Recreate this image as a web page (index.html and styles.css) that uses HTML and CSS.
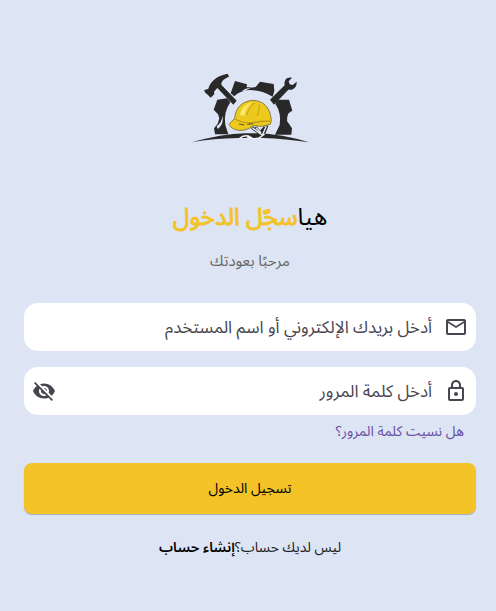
FILE: index.html
```html
<!DOCTYPE html>
<html lang="ar" dir="rtl">
<head>
<meta charset="utf-8">
<meta name="viewport" content="width=device-width, initial-scale=1">
<title>تسجيل الدخول</title>
<link rel="stylesheet" href="styles.css">
</head>
<body>
<main class="page">
  <svg class="logo" viewBox="0 0 390 255" aria-hidden="true">
    <g fill="#292929">
      <path d="M20 232Q110 207 180 205H215Q290 207 372 232Q300 221 236 219L160 219Q85 220 20 232Z"/>
      <path d="M57 76L70 71C76 50 94 32 128 26L132 35C117 41 108 49 109 59L155 107L145 119L97 69L87 80L88 88L77 98L69 90L61 83Z"/>
      <path d="M255 104L299 61C296 46 305 35 321 38L311 49L314 58L323 60L335 50C336 66 325 77 310 74L267 119Z"/>
      <path d="M137 85L150 48L186 58L185 67L212 66L225 50L266 57L268 77L263 95Q228 74 192 75Q164 77 148 94Z"/>
      <path d="M97 104L126 100L136 112Q115 142 121 180L130 208H90L87 190L98 176L103 160L99 148L86 134Z"/>
      <path d="M278 104L312 104L322 137L309 147L306 168L321 190L319 209H270L284 180Q290 145 271 116Z"/>
    </g>
    <path d="M171 77Q195 64 213 66Q192 68 181 78ZM95 184Q111 172 112 153Q118 176 98 192ZM319 138Q304 149 308 167Q312 151 319 138Z" fill="#dde4f4"/>
    <path d="M201 187Q218 201 234 211L246 181M211 187L226 203L240 187" fill="none" stroke="#292929" stroke-width="9"/>
    <path d="M202 188Q220 202 232 211L244 183M213 188L228 203M164 219Q183 207 196 216Q212 229 225 217L239 207M185 215Q203 225 222 219" fill="none" stroke="#eef1f7" stroke-width="4"/>
    <path d="M132 178L149 160C151 130 170 108 204 106C239 107 257 132 259 167L256 178Q232 188 205 182Q184 199 159 196Q138 192 132 178Z" fill="#ecc91c" stroke="#5b5424" stroke-width="2"/>
    <path d="M149 162Q173 175 203 174Q230 167 257 169" fill="none" stroke="#bd9712" stroke-width="4"/>
    <path d="M164 150Q171 119 202 111Q183 128 178 153Z" fill="#fae66a"/>
    <path d="M186 151Q190 126 210 113M216 153Q225 135 223 118" fill="none" stroke="#c7a218" stroke-width="3"/>
    <path d="M162 177L178 180M187 178L204 176" stroke="#575028" stroke-width="3"/>
  </svg>

  <h1 class="title">هيا<span class="title-accent">سجّل الدخول</span></h1>
  <p class="subtitle">مرحبًا بعودتك</p>

  <form class="form">
    <div class="field">
      <svg class="icon" viewBox="0 0 24 24" aria-hidden="true"><path d="M22 6c0-1.100-.9-2-2-2H4c-1.100 0-2 .9-2 2v12c0 1.100.9 2 2 2h16c1.100 0 2-.9 2-2V6zm-2 0l-8 5-8-5h16zm0 12H4V8l8 5 8-5v10z"/></svg>
      <input class="input" type="text" aria-label="البريد الإلكتروني" placeholder="أدخل بريدك الإلكتروني أو اسم المستخدم">
    </div>
    <div class="field">
      <svg class="icon" viewBox="0 0 24 24" aria-hidden="true"><path d="M18 8h-1V6c0-2.760-2.240-5-5-5S7 3.240 7 6v2H6c-1.100 0-2 .9-2 2v10c0 1.100.9 2 2 2h12c1.100 0 2-.9 2-2V10c0-1.100-.9-2-2-2zM9 6c0-1.660 1.340-3 3-3s3 1.340 3 3v2H9V6zm9 14H6V10h12v10zm-6-3c1.100 0 2-.9 2-2s-.9-2-2-2-2 .9-2 2 .9 2 2 2z"/></svg>
      <input class="input" type="password" aria-label="كلمة المرور" placeholder="أدخل كلمة المرور">
      <button class="toggle" type="button" aria-label="إظهار كلمة المرور">
        <svg class="icon" viewBox="0 0 24 24" aria-hidden="true"><path d="M12 7c2.760 0 5 2.240 5 5 0 .65-.13 1.260-.36 1.830l2.920 2.920c1.510-1.260 2.700-2.890 3.430-4.750-1.730-4.390-6-7.500-11-7.500-1.400 0-2.740.25-3.980.7l2.160 2.160C10.740 7.130 11.350 7 12 7zM2 4.270l2.280 2.280.46.46C3.080 8.300 1.780 10.020 1 12c1.730 4.390 6 7.500 11 7.500 1.550 0 3.030-.3 4.380-.84l.42.42L19.730 22 21 20.730 3.270 3 2 4.270zM7.530 9.800l1.550 1.550c-.05.21-.08.43-.08.65 0 1.660 1.340 3 3 3 .22 0 .44-.03.65-.08l1.550 1.550c-.67.33-1.410.53-2.200.53-2.760 0-5-2.240-5-5 0-.79.2-1.530.53-2.200zm4.310-.78l3.150 3.150.02-.16c0-1.660-1.340-3-3-3l-.17.01z"/></svg>
      </button>
    </div>
    <a class="forgot" href="#">هل نسيت كلمة المرور؟</a>
    <button class="submit" type="submit">تسجيل الدخول</button>
  </form>

  <p class="signup">ليس لديك حساب؟<a class="signup-link" href="#">إنشاء حساب</a></p>
</main>
</body>
</html>
```
FILE: styles.css
```css
* {
  box-sizing: border-box;
}

body {
  margin: 0;
  min-height: 100vh;
  background: #dde4f4;
  color: #000;
  font-family: "Noto Sans", "Noto Sans Arabic", sans-serif;
  font-size: 14px;
}

.page {
  display: flex;
  flex-direction: column;
  align-items: center;
  padding: 65px 20px 24px 24px;
}

.logo {
  width: 130px;
  height: 85px;
}

.title {
  margin: 46px 0 0;
  font-size: 24px;
  line-height: 40px;
  font-weight: 400;
}

.title-accent {
  color: #f3c328;
  -webkit-text-stroke: 1px #f3c328;
}

.subtitle {
  margin: 12px 0 0;
  color: #666;
  font-size: 15px;
  line-height: 24px;
}

.form {
  display: flex;
  flex-direction: column;
  width: 100%;
  margin-top: 31px;
}

.field {
  display: flex;
  align-items: center;
  gap: 12px;
  height: 48px;
  margin-bottom: 16px;
  padding: 0 8px;
  border-radius: 14px;
  background: #fff;
}

.icon {
  display: block;
  flex: none;
  width: 24px;
  height: 24px;
  fill: #49454f;
}

.input {
  flex: 1;
  min-width: 0;
  height: 100%;
  padding: 0 0 2px;
  border: 0;
  outline: 0;
  background: none;
  font: inherit;
  font-size: 17px;
}

.input::placeholder {
  color: #49454f;
  opacity: 1;
}

.toggle {
  padding: 0;
  border: 0;
  background: none;
}

.forgot {
  align-self: flex-start;
  margin: -12px 12px 0 0;
  color: #6750a4;
  line-height: 24px;
  text-decoration: none;
}

.submit {
  height: 51px;
  margin-top: 20px;
  border: 0;
  border-radius: 8px;
  background: #f3c328;
  box-shadow: 0 1px 1px #a8acb6;
  color: #000;
  font: inherit;
}

.signup {
  margin: 21px 0 0;
  color: #222;
  line-height: 24px;
}

.signup-link {
  color: #000;
  font-weight: 600;
  text-decoration: none;
}
```
